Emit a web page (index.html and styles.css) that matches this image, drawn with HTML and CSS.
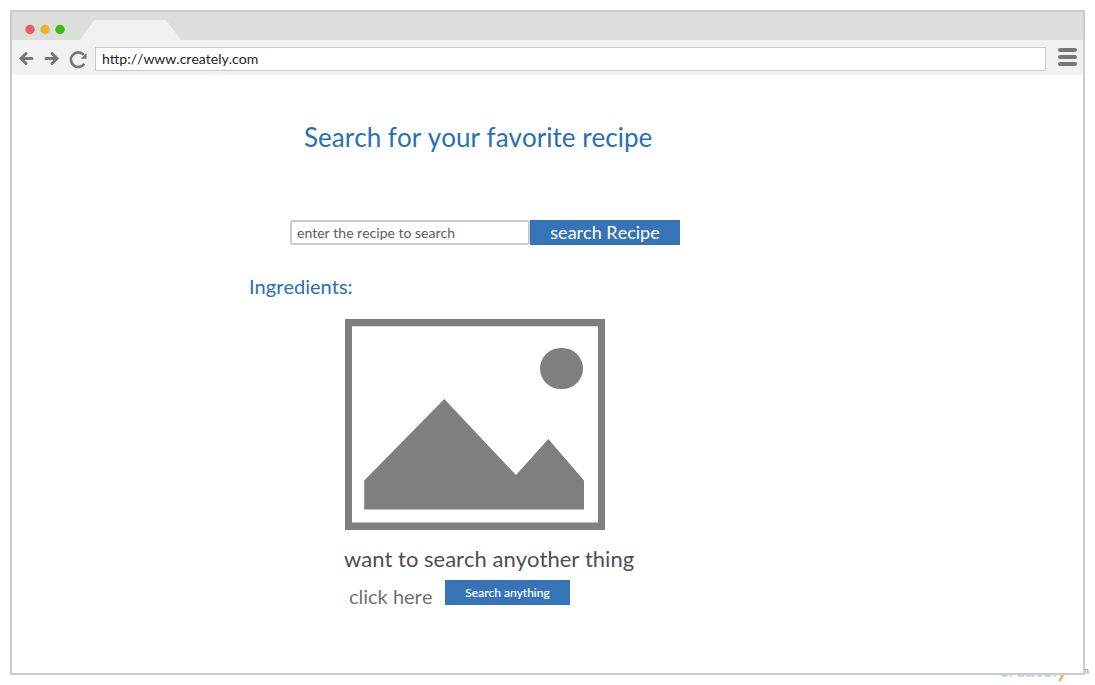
FILE: index.html
```html
<!DOCTYPE html>
<html lang="en">
<head>
<meta charset="utf-8">
<title>Search for your favorite recipe</title>
<link rel="stylesheet" href="styles.css">
</head>
<body>
<div class="brand"><span class="brand-name">createl<span class="brand-tail">y</span></span><span class="brand-com">.com</span></div>
<div class="window">
  <div class="tabbar">
    <svg width="200" height="28" viewBox="0 0 200 28">
      <circle cx="18" cy="17.5" r="4.7" fill="#e95d6c"/>
      <circle cx="33" cy="17.5" r="4.7" fill="#edb52e"/>
      <circle cx="48" cy="17.5" r="4.7" fill="#3dbb1d"/>
      <path d="M67.500 28L82.500 8H154L169 28Z" fill="#f1f1f1"/>
    </svg>
  </div>
  <div class="toolbar">
    <svg class="nav" width="83" height="35" viewBox="0 0 83 35" fill="none" stroke="#777" stroke-width="3">
      <path d="M20 18.500H10M14 13.500L9 18.500L14 23.500" stroke-linecap="round"/>
      <path d="M34 18.500H44M40 13.500L45 18.500L40 23.500" stroke-linecap="round"/>
      <path d="M71.800 15A7.300 7.300 0 1 0 72.300 23.700" stroke-width="2.600"/>
      <path d="M74.500 13V18.700H68.800Z" fill="#777" stroke="none"/>
    </svg>
    <div class="url">http://www.creately.com</div>
    <svg class="menu" width="19" height="18" viewBox="0 0 19 18" fill="#777">
      <rect width="19" height="4" rx="2"/><rect y="7" width="19" height="4" rx="2"/><rect y="14" width="19" height="4" rx="2"/>
    </svg>
  </div>
  <main class="page">
    <h1 class="title">Search for your favorite recipe</h1>
    <div class="search">
      <div class="field">enter the recipe to search</div>
      <div class="button button-large">search Recipe</div>
    </div>
    <h2 class="ingredients">Ingredients:</h2>
    <svg class="picture" width="260" height="211" viewBox="0 0 260 211" fill="#7f7f7f">
      <path fill-rule="evenodd" d="M0 0H260V211H0ZM7 7.200V203.600H253V7.200Z"/>
      <rect x="195" y="29" width="43" height="41" rx="20.500"/>
      <path d="M19.200 161.500L99.300 80L171 156L203.300 120L239 161.500V190.600H19.200Z"/>
    </svg>
    <p class="other">want to search anyother thing</p>
    <div class="more">
      <span class="click">click here</span>
      <div class="button button-small">Search anything</div>
    </div>
  </main>
</div>
</body>
</html>
```
FILE: styles.css
```css
* { box-sizing: border-box; }
body {
  margin: 0;
  padding: 10px;
  height: 685px;
  overflow: hidden;
  background: #fff;
  font-family: Lato, sans-serif;
  font-kerning: none;
}
svg { display: block; }
.window {
  position: relative;
  width: 1075px;
  height: 665px;
  border: 2px solid #cbcbcb;
  border-radius: 1px;
  background: #fff;
}
.tabbar { height: 28px; background: #dcdedb; }
.toolbar {
  display: flex;
  height: 35px;
  background: #f1f1f1;
}
.url {
  width: 951px;
  height: 24px;
  margin-top: 7px;
  padding-left: 6px;
  border: 1px solid #cbcbcb;
  background: #fff;
  color: #222;
  font-size: 14px;
  line-height: 21px;
}
.menu { margin: 8px 0 0 12px; }
.page { display: flex; flex-direction: column; align-items: flex-start; }
.title {
  margin: 46px 0 0 292px;
  color: #2870b6;
  font-size: 26px;
  font-weight: 400;
  line-height: 32px;
}
.search { display: flex; margin: 67px 0 0 278px; }
.field {
  width: 240px;
  height: 25px;
  padding-left: 5px;
  border: 2px solid #cbcbcb;
  border-radius: 3px;
  color: #5c5c5c;
  font-size: 14px;
  line-height: 22px;
}
.button {
  height: 25px;
  background: #3673b7;
  color: #fff;
  text-align: center;
  line-height: 25px;
}
.button-large { width: 150px; font-size: 18px; }
.ingredients {
  margin: 28px 0 0 237px;
  color: #2870b6;
  font-size: 20px;
  font-weight: 400;
  line-height: 26px;
}
.picture { margin: 20px 0 0 333px; }
.other {
  margin: 14px 0 0 332px;
  color: #4f4f4f;
  font-size: 22px;
  line-height: 30px;
}
.more { display: flex; margin: 6px 0 0 337px; }
.click { width: 96px; color: #707070; font-size: 20px; line-height: 32px; }
.button-small { width: 125px; font-size: 12px; -webkit-text-stroke: 0.15px #fff; }
/* the brand mark sits behind the window's lower right corner */
.brand {
  position: absolute;
  left: 999px;
  top: 655px;
  display: flex;
  white-space: nowrap;
}
.brand-name { width: 69px; color: #b9d7ee; font-size: 19px; font-weight: 700; line-height: 30px; }
.brand-tail { color: #f9ad5b; font-size: 25px; font-style: italic; line-height: 1; }
.brand-com { color: #888; font-size: 10px; line-height: 30px; }
```
